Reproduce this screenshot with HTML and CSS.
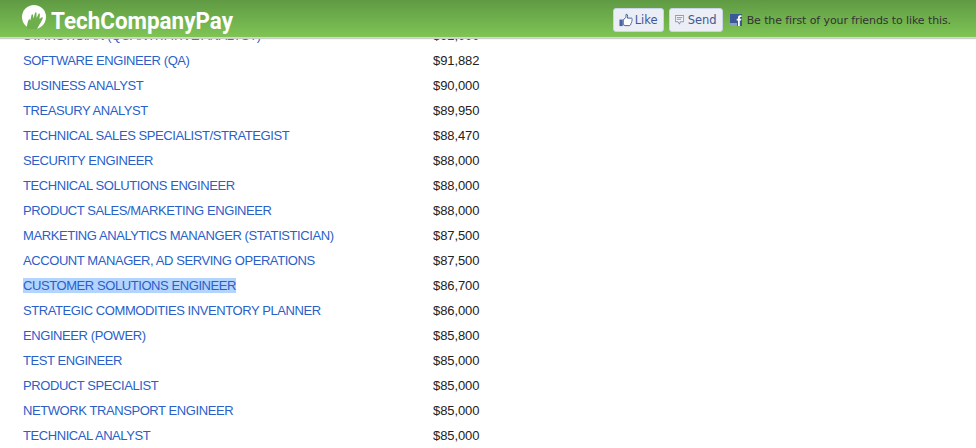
FILE: index.html
```html
<!DOCTYPE html>
<html lang="en">
<head>
<meta charset="utf-8">
<title>TechCompanyPay</title>
<link rel="stylesheet" href="styles.css">
</head>
<body>
<header class="topbar">
  <div class="brand">
    <svg class="logo" width="24" height="24" viewBox="0 0 24 24"><circle cx="12" cy="12" r="12" fill="#fff"/><path d="M5 21C5.5 18 6 15.5 7 14.5C7.6 14 8.2 14.6 8.4 15.5L9.5 10C9.8 9 10.8 9 11 10L11.5 13.5L13 8C13.4 7 14.4 7.2 14.5 8.2L14.5 13L16.5 9C17 8.2 18 8.5 17.9 9.4L17.5 14L19.5 12.5C20.3 12 21 12.6 20.7 13.4L18.5 18C16.5 21 15 24 15 24H5Z" fill="#6fae4d"/></svg>
    <span class="brand-name">TechCompanyPay</span>
  </div>
  <div class="social">
    <button class="fb-btn like"><svg width="17" height="16" viewBox="0 0 15 15"><rect x="0.5" y="7" width="3.5" height="7" fill="#4a66a8"/><path d="M4.5 7.5L7.5 4.5V1.5C9 1 9.5 2.5 9 5.5H13.5C14.5 6 14 7 13.5 7.5C14.3 8.3 14 9.2 13.2 9.6C13.6 10.5 13.2 11.2 12.5 11.5C12.7 12.5 12 13.5 11 13.5H6.5L4.5 12.5Z" fill="#fff" stroke="#3b5998"/></svg>Like</button>
    <button class="fb-btn send"><svg width="13" height="14" viewBox="0 0 13 14"><path d="M0.5 0.5H12.5V9.5H7.5L6.5 13L4.5 9.5H0.5Z" fill="#f4f6fb" stroke="#5f7396"/><path d="M2.5 3.5H10.5M2.5 6H9" stroke="#5f7396"/></svg>Send</button>
    <svg class="fb-icon" width="12" height="12" viewBox="0 0 12 12"><rect width="12" height="12" fill="#3b5998"/><rect y="9" width="7" height="3" fill="#8b9dc3"/><path d="M8 12V6.5H6.7V4.8H8V3.6C8 2 9 1.2 10.2 1.2H11.5V3H10.5C10 3 9.8 3.2 9.8 3.7V4.8H11.4L11.1 6.5H9.8V12Z" fill="#fff"/></svg>
    <span class="social-text">Be the first of your friends to like this.</span>
  </div>
</header>
<main class="list">
  <div class="row cut"><a>STATISTICIAN (QUANTITATIVE ANALYST)</a><span>$92,000</span></div>
  <div class="row"><a>SOFTWARE ENGINEER (QA)</a><span>$91,882</span></div>
  <div class="row"><a>BUSINESS ANALYST</a><span>$90,000</span></div>
  <div class="row"><a>TREASURY ANALYST</a><span>$89,950</span></div>
  <div class="row"><a>TECHNICAL SALES SPECIALIST/STRATEGIST</a><span>$88,470</span></div>
  <div class="row"><a>SECURITY ENGINEER</a><span>$88,000</span></div>
  <div class="row"><a>TECHNICAL SOLUTIONS ENGINEER</a><span>$88,000</span></div>
  <div class="row"><a>PRODUCT SALES/MARKETING ENGINEER</a><span>$88,000</span></div>
  <div class="row"><a>MARKETING ANALYTICS MANANGER (STATISTICIAN)</a><span>$87,500</span></div>
  <div class="row"><a>ACCOUNT MANAGER, AD SERVING OPERATIONS</a><span>$87,500</span></div>
  <div class="row"><a class="selected">CUSTOMER SOLUTIONS ENGINEER</a><span>$86,700</span></div>
  <div class="row"><a>STRATEGIC COMMODITIES INVENTORY PLANNER</a><span>$86,000</span></div>
  <div class="row"><a>ENGINEER (POWER)</a><span>$85,800</span></div>
  <div class="row"><a>TEST ENGINEER</a><span>$85,000</span></div>
  <div class="row"><a>PRODUCT SPECIALIST</a><span>$85,000</span></div>
  <div class="row"><a>NETWORK TRANSPORT ENGINEER</a><span>$85,000</span></div>
  <div class="row"><a>TECHNICAL ANALYST</a><span>$85,000</span></div>
</main>
</body>
</html>
```
FILE: styles.css
```css
html, body {
  margin: 0;
  padding: 0;
  height: 448px;
  overflow: hidden;
  background: #fff;
}
body {
  font-family: "Liberation Sans", Arial, sans-serif;
  display: flex;
  flex-direction: column;
}
.topbar {
  flex: none;
  height: 37px;
  position: relative;
  z-index: 2;
  display: flex;
  align-items: center;
  justify-content: space-between;
  background: linear-gradient(#5f9a43, #7fc455);
  border-bottom: 1px solid #c9e4b4;
  box-shadow: 0 1px 1px #ccc;
}
.brand {
  display: flex;
  align-items: center;
  gap: 5px;
  margin-left: 22px;
  height: 37px;
}
.logo {
  margin-top: -3px;
}
.brand-name {
  color: #fff;
  font-family: Roboto, "Liberation Sans", sans-serif;
  font-size: 23px;
  line-height: 24px;
  font-weight: 700;
  transform: scaleX(0.975);
  transform-origin: left center;
  margin-top: 6px;
}
.social {
  display: flex;
  align-items: center;
  margin-right: 25px;
  margin-top: 3px;
}
.fb-btn {
  display: flex;
  align-items: center;
  gap: 2px;
  height: 24px;
  padding: 0 5px;
  background: #eceef5;
  border: 1px solid #cad4e7;
  border-radius: 3px;
  color: #3b5998;
  font-family: "DejaVu Sans", sans-serif;
  font-size: 11.5px;
}
.like { margin-right: 5px; width: 51px; }
.send { width: 54px; gap: 4px; }
.fb-icon { margin-left: 7px; }
.social-text {
  margin-left: 5px;
  font-family: "DejaVu Sans", sans-serif;
  font-size: 11px;
  letter-spacing: -0.1px;
  color: #333;
  white-space: nowrap;
}
.list {
  flex: 1;
  min-height: 0;
  overflow: hidden;
  padding-left: 23px;
}
.cut {
  margin-top: -15px;
}
.row {
  display: grid;
  grid-template-columns: 410px auto;
  justify-content: start;
  height: 25px;
  line-height: 25px;
  font-size: 13px;
  letter-spacing: -0.1px;
  color: #222;
}
.row a {
  color: #2a5fc9;
  white-space: nowrap;
  letter-spacing: -0.42px;
}
.row .selected {
  justify-self: start;
  background: #b3d4fd;
  line-height: 15px;
  height: 15px;
  align-self: center;
}
```
